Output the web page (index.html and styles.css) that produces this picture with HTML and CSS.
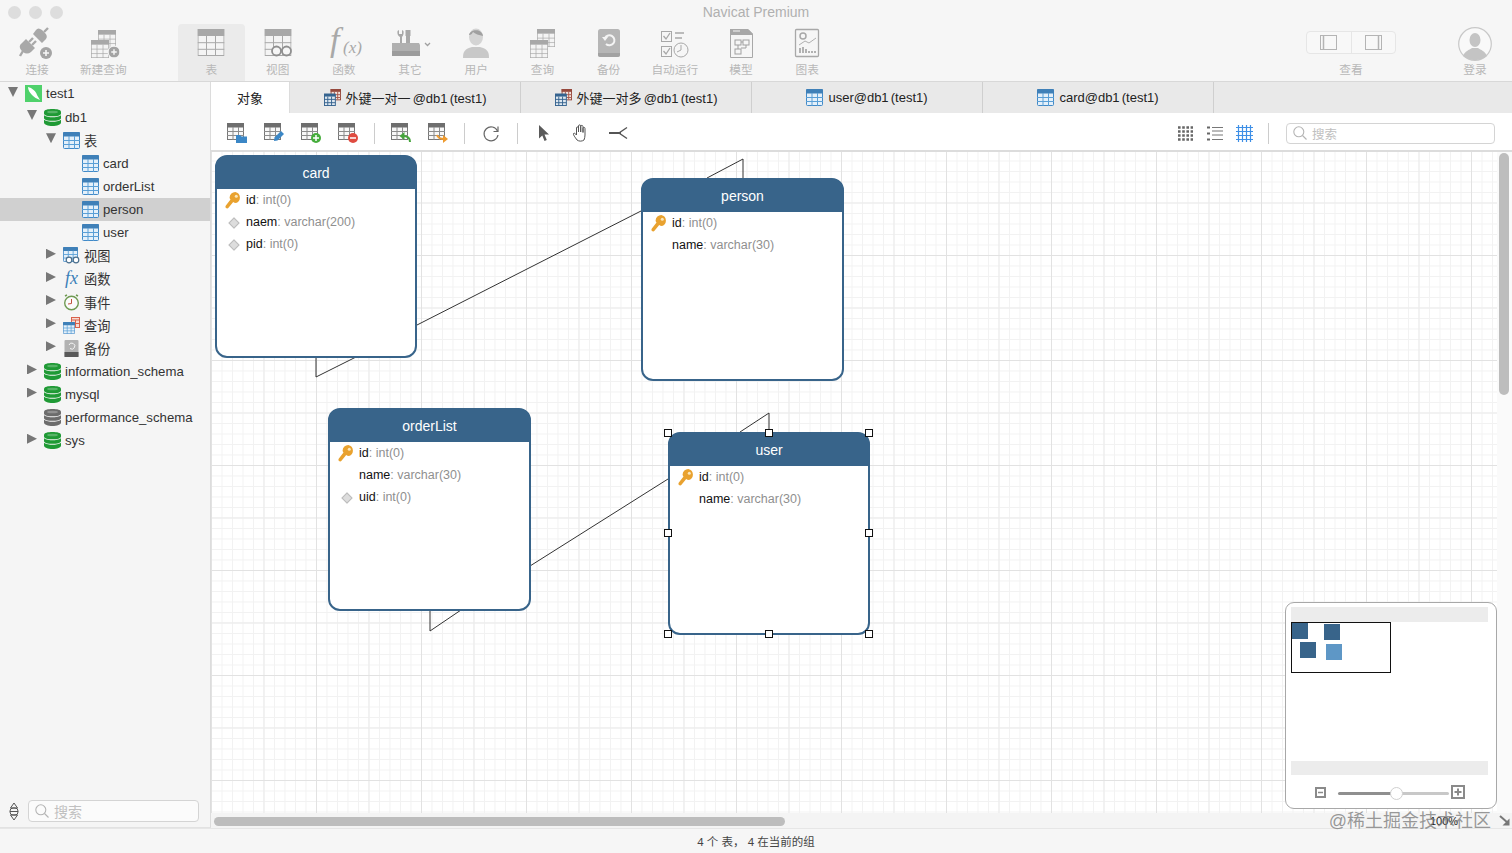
FILE: index.html
```html
<!DOCTYPE html>
<html lang="zh">
<head>
    <meta charset="UTF-8">
    <title>Navicat Premium</title>
    <link rel="stylesheet" href="styles.css">
</head>
<body>

<svg class="defs" width="0" height="0">
    <symbol id="i-gtable" viewBox="0 0 27 27">
        <rect x="0.5" y="0.5" width="26" height="26" fill="#f4f4f4" stroke="#a8a8a8"/>
        <rect width="27" height="7" fill="#a8a8a8"/>
        <path d="M9 7V27M18 7V27M0 13.7H27M0 20.3H27" stroke="#a8a8a8" fill="none"/>
    </symbol>
    <symbol id="i-dtable" viewBox="0 0 17 17">
        <rect x="0.5" y="0.5" width="16" height="16" fill="#f8f8f8" stroke="#777"/>
        <rect width="17" height="4.5" fill="#6e6e6e"/>
        <path d="M6 4V17M11.5 4V17M0 8.5H17M0 12.5H17" stroke="#8c8c8c" fill="none"/>
    </symbol>
    <symbol id="i-btable" viewBox="0 0 17 17">
        <rect x="0.5" y="0.5" width="16" height="16" rx="1" fill="#e4f0fa" stroke="#4189c7"/>
        <rect width="17" height="4.5" rx="1" fill="#3f80b8"/>
        <path d="M6 4V17M11.5 4V17M0 8.5H17M0 12.5H17" stroke="#5a9fd6" fill="none"/>
    </symbol>
    <symbol id="i-rel" viewBox="0 0 18 18">
        <rect x="7.5" y="0.5" width="10" height="11" fill="#f2e2dc" stroke="#96483c"/>
        <rect x="7" width="11" height="3" fill="#96483c"/>
        <path d="M11 3V11M14.5 3V11M7 6H18M7 9H18" stroke="#a8584c" fill="none"/>
        <rect x="0.5" y="5.5" width="11.500" height="12" fill="#dfe8f0" stroke="#35638f"/>
        <rect y="5" width="12" height="3" fill="#35638f"/>
        <path d="M4 8V18M8 8V18M0 11H12M0 14.500H12" stroke="#35638f" fill="none"/>
    </symbol>
    <symbol id="i-db" viewBox="0 0 17 17">
        <g fill="currentColor">
            <path d="M0 3C0 0.800 4 0 8.500 0S17 0.800 17 3V4.500C17 6.500 13 7.300 8.500 7.300S0 6.500 0 4.500Z"/>
            <path d="M0 6.300C2 7.800 5.500 8.300 8.500 8.300S15 7.800 17 6.300V9C17 11 13 11.800 8.500 11.800S0 11 0 9Z"/>
            <path d="M0 10.800C2 12.300 5.500 12.800 8.500 12.800S15 12.300 17 10.800V13.500C17 15.800 13 17 8.500 17S0 15.800 0 13.500Z"/>
        </g>
        <ellipse cx="8.500" cy="3" rx="5.500" ry="1.300" fill="#fff" opacity="0.250"/>
    </symbol>
    <symbol id="i-key" viewBox="0 0 16 17">
        <path d="M10.300 0A5.700 5.700 0 0 1 11 11C9.800 11 8.900 10.600 8.200 10.100L3.500 15.800C2.200 17.300 -0.400 15.600 0.700 13.800L5.500 7.500C4.900 6.700 4.600 5.800 4.600 5.400A5.700 5.700 0 0 1 10.300 0Z" fill="#e9a22f"/>
        <circle cx="11.300" cy="4.300" r="1.500" fill="#fbe7bb"/>
    </symbol>
    <symbol id="i-badge-plus" viewBox="0 0 12 12">
        <circle cx="6" cy="6" r="6" fill="#a4a4a4"/>
        <path d="M3 6H9M6 3V9" stroke="#f6f6f6" stroke-width="1.600"/>
    </symbol>
    <symbol id="i-search" viewBox="0 0 14 14">
        <circle cx="5.800" cy="5.800" r="5" fill="none" stroke="#b4b4b4" stroke-width="1.100"/>
        <path d="M9.500 9.500L13.500 13.500" stroke="#b4b4b4" stroke-width="1.100"/>
    </symbol>
</svg>

<header class="titlebar">
    <div class="lights"><i></i><i></i><i></i></div>
    <div class="title">Navicat Premium</div>
    <div></div>
</header>

<nav class="toolbar">
    <div class="tool">
        <svg width="40" height="32" viewBox="0 0 40 32">
            <g fill="#a8a8a8" stroke="none">
                <path d="M16 7L25 16L29 12Q31 9 28 6L25 3Q21 0 19 3Z"/>
                <path d="M9 12L18 21L14 25Q10 28 6 25L4 23Q1 19 5 16Z"/>
            </g>
            <path d="M27 5L31 1M6 24L3 29M12 15L16 11M15 18L19 14" stroke="#a8a8a8" stroke-width="2.400" fill="none"/>
            <use href="#i-badge-plus" x="23" y="20" width="12" height="12"/>
        </svg>
        <span>连接</span>
    </div>
    <div class="tool tool-gap-after">
        <svg width="40" height="32" viewBox="0 0 40 32">
            <use href="#i-gtable" x="15" y="2" width="18" height="20"/>
            <use href="#i-gtable" x="8" y="13" width="18" height="18"/>
            <circle cx="31" cy="25" r="6.500" fill="#f6f6f6"/>
            <use href="#i-badge-plus" x="25.500" y="19.500" width="11" height="11"/>
        </svg>
        <span>新建查询</span>
    </div>
    <div class="tool tool-active">
        <svg width="40" height="32" viewBox="0 0 40 32"><use href="#i-gtable" x="6.500" y="2" width="27" height="27"/></svg>
        <span>表</span>
    </div>
    <div class="tool">
        <svg width="40" height="32" viewBox="0 0 40 32">
            <use href="#i-gtable" x="6.500" y="2" width="27" height="27"/>
            <g fill="#f6f6f6" stroke="#8f8f8f" stroke-width="1.800">
                <circle cx="18.500" cy="24" r="4.500"/>
                <circle cx="28.500" cy="24" r="4.500"/>
            </g>
            <path d="M23 23.500H24" stroke="#8f8f8f" stroke-width="1.800"/>
        </svg>
        <span>视图</span>
    </div>
    <div class="tool">
        <svg width="40" height="32" viewBox="0 0 40 32">
            <text class="fx-big" x="6" y="24">f</text>
            <text class="fx-small" x="19" y="26">(x)</text>
        </svg>
        <span>函数</span>
    </div>
    <div class="tool">
        <svg width="40" height="32" viewBox="0 0 40 32">
            <path d="M10 16V10C8 9 7 7 7.500 4L9 3V7H12V3L13.500 4C14 7 13 9 12 10V16Z" fill="#a8a8a8"/>
            <path d="M16 16V9H15.500V3H20.500V9H20V16Z" fill="#a8a8a8"/>
            <path d="M2 16H29L30 18V29H2V18Z" fill="#b0b0b0"/>
            <rect x="2" y="24" width="28" height="5" fill="#9c9c9c"/>
            <path d="M35 16L37.500 18.500L40 16" stroke="#a0a0a0" stroke-width="1.300" fill="none"/>
        </svg>
        <span>其它</span>
    </div>
    <div class="tool">
        <svg width="40" height="32" viewBox="0 0 40 32">
            <ellipse cx="20" cy="10" rx="7" ry="8.500" fill="#d4d4d4"/>
            <path d="M13 8C14 2 26 1 27 9C23 8 19 7 17 5C16 7 15 8 13 8Z" fill="#a0a0a0"/>
            <path d="M7 31C7 24 9 22 16 20H24C31 22 33 24 33 31Z" fill="#c8c8c8"/>
        </svg>
        <span>用户</span>
    </div>
    <div class="tool">
        <svg width="40" height="32" viewBox="0 0 40 32">
            <use href="#i-gtable" x="15" y="2" width="18" height="18"/>
            <use href="#i-gtable" x="8" y="13" width="18" height="18"/>
        </svg>
        <span>查询</span>
    </div>
    <div class="tool">
        <svg width="40" height="32" viewBox="0 0 40 32">
            <rect x="9" y="2" width="22" height="28" rx="2.500" fill="#b6b6b6"/>
            <path d="M9 26H31V27.500A2.500 2.500 0 0 1 28.500 30H11.500A2.500 2.500 0 0 1 9 27.500Z" fill="#a2a2a2"/>
            <path d="M16 11A5 5 0 1 1 17 17" stroke="#f4f4f4" stroke-width="2" fill="none"/>
            <path d="M13 10H19L16 14Z" fill="#f4f4f4"/>
        </svg>
        <span>备份</span>
    </div>
    <div class="tool">
        <svg width="40" height="32" viewBox="0 0 40 32">
            <g fill="none" stroke="#a8a8a8">
                <rect x="6.500" y="4.500" width="10" height="10"/>
                <rect x="6.500" y="19.500" width="10" height="10"/>
                <path d="M8.500 9L11 12L15 6M8.500 24L11 27L15 21" stroke-width="1.300"/>
                <path d="M20 6H29M20 11H27" stroke-width="1.400"/>
                <circle cx="26" cy="23" r="7"/>
                <path d="M26 18V23L22 25"/>
            </g>
        </svg>
        <span>自动运行</span>
    </div>
    <div class="tool">
        <svg width="40" height="32" viewBox="0 0 40 32">
            <path d="M9.500 2.500H27L31.500 7V30.500H9.500Z" fill="#f6f6f6" stroke="#a8a8a8"/>
            <path d="M9 2H27L32 7V8H9Z" fill="#a8a8a8"/>
            <path d="M12 4H19" stroke="#f6f6f6"/>
            <g fill="none" stroke="#a0a0a0">
                <rect x="14" y="13" width="6" height="5"/>
                <rect x="22" y="13" width="6" height="5"/>
                <rect x="14" y="22" width="6" height="5"/>
                <path d="M17 18V22M20 15H22M25 18V21H20"/>
            </g>
        </svg>
        <span>模型</span>
    </div>
    <div class="tool">
        <svg width="40" height="32" viewBox="0 0 40 32">
            <rect x="8.500" y="2.500" width="23" height="27" rx="1" fill="#f6f6f6" stroke="#a8a8a8" stroke-width="1.300"/>
            <circle cx="16" cy="9" r="3" fill="none" stroke="#a8a8a8" stroke-width="1.500"/>
            <path d="M12 18L18 14L22 16L29 11" stroke="#b0b0b0" fill="none"/>
            <path d="M13 26V21M16 26V20M19 26V22M22 26V24M25 26V24M28 26V24" stroke="#a0a0a0" stroke-width="1.600"/>
        </svg>
        <span>图表</span>
    </div>

    <div class="tool tool-view">
        <div class="segment">
            <div class="seg-btn">
                <svg width="17" height="15" viewBox="0 0 17 15"><rect x="0.500" y="0.500" width="16" height="14" fill="none" stroke="#b4b4b4"/><path d="M3.500 1V14" stroke="#b4b4b4" stroke-width="1.500"/></svg>
            </div>
            <div class="seg-btn">
                <svg width="17" height="15" viewBox="0 0 17 15"><rect x="0.500" y="0.500" width="16" height="14" fill="none" stroke="#b4b4b4"/><path d="M13.500 1V14" stroke="#b4b4b4" stroke-width="1.500"/></svg>
            </div>
        </div>
        <span>查看</span>
    </div>
    <div class="tool tool-login">
        <svg width="40" height="34" viewBox="0 0 40 34">
            <circle cx="20" cy="17" r="16.300" fill="#f9f9f9" stroke="#c8c8c8" stroke-width="1.200"/>
            <ellipse cx="20" cy="13" rx="5.500" ry="7" fill="#c4c4c4"/>
            <path d="M8 29C10 24 14 23 17 21H23C26 23 30 24 32 29C26 34.500 14 34.500 8 29Z" fill="#c4c4c4"/>
        </svg>
        <span>登录</span>
    </div>
</nav>

<div class="main">
    <aside class="sidebar">
        <ul class="tree">
            <li class="row lv0 open"><i class="arrow"></i>
                <svg class="ticon" viewBox="0 0 17 17"><rect width="17" height="17" fill="#4fd16b"/><path d="M3 2C7 3 11 6 12 10C13 12 14 13 15 15C12 14 9 12 7 10C5 8 3 5 3 2Z" fill="#fff"/></svg>
                <span>test1</span></li>
            <li class="row lv1 open"><i class="arrow"></i><svg class="ticon db-on"><use href="#i-db"/></svg><span>db1</span></li>
            <li class="row lv2 open"><i class="arrow"></i><svg class="ticon"><use href="#i-btable"/></svg><span>表</span></li>
            <li class="row lv3"><i class="arrow none"></i><svg class="ticon"><use href="#i-btable"/></svg><span>card</span></li>
            <li class="row lv3"><i class="arrow none"></i><svg class="ticon"><use href="#i-btable"/></svg><span>orderList</span></li>
            <li class="row lv3 selected"><i class="arrow none"></i><svg class="ticon"><use href="#i-btable"/></svg><span>person</span></li>
            <li class="row lv3"><i class="arrow none"></i><svg class="ticon"><use href="#i-btable"/></svg><span>user</span></li>
            <li class="row lv2"><i class="arrow"></i>
                <svg class="ticon" viewBox="0 0 17 17"><use href="#i-btable" width="15" height="15"/><g fill="#fff" stroke="#4a6f8e" stroke-width="1.200"><circle cx="6" cy="13" r="2.800"/><circle cx="13" cy="13" r="2.800"/></g></svg>
                <span>视图</span></li>
            <li class="row lv2"><i class="arrow"></i>
                <svg class="ticon ticon-open" viewBox="0 0 17 17"><text class="fx-tree" x="2" y="14">fx</text></svg>
                <span>函数</span></li>
            <li class="row lv2"><i class="arrow"></i>
                <svg class="ticon" viewBox="0 0 17 17"><circle cx="8.500" cy="9" r="6.800" fill="#fbfbfb" stroke="#6f9a52" stroke-width="1.400"/><path d="M8.500 5V9.500L5 10" stroke="#c0503c" fill="none"/><path d="M2 2L4 1M15 2L13 1" stroke="#6f9a52" stroke-width="1.500"/></svg>
                <span>事件</span></li>
            <li class="row lv2"><i class="arrow"></i>
                <svg class="ticon" viewBox="0 0 17 17">
                    <rect x="8.500" y="0.500" width="8" height="10" fill="#f6dcd4" stroke="#d9614b"/>
                    <path d="M8 3H17M12.500 3V10M8 6.500H17" stroke="#d9614b" fill="none"/>
                    <use href="#i-btable" y="5" width="12" height="12"/>
                </svg>
                <span>查询</span></li>
            <li class="row lv2"><i class="arrow"></i>
                <svg class="ticon" viewBox="0 0 17 17"><rect x="1.500" width="14" height="17" rx="1" fill="#b2b2b2"/><rect x="1.500" y="12" width="14" height="5" fill="#595959"/><path d="M6 5A3 3 0 1 1 7 8.500" stroke="#f4f4f4" fill="none"/></svg>
                <span>备份</span></li>
            <li class="row lv1"><i class="arrow"></i><svg class="ticon db-on"><use href="#i-db"/></svg><span>information_schema</span></li>
            <li class="row lv1"><i class="arrow"></i><svg class="ticon db-on"><use href="#i-db"/></svg><span>mysql</span></li>
            <li class="row lv1"><i class="arrow none"></i><svg class="ticon db-off"><use href="#i-db"/></svg><span>performance_schema</span></li>
            <li class="row lv1"><i class="arrow"></i><svg class="ticon db-on"><use href="#i-db"/></svg><span>sys</span></li>
        </ul>
        <div class="side-foot">
            <svg class="updown" width="10" height="17" viewBox="0 0 10 17">
                <path d="M5 0L1.500 5H8.500ZM5 17L1.500 12H8.500Z" fill="none" stroke="#555"/>
                <path d="M1 8.500H9" stroke="#555"/>
                <rect x="1" y="5" width="8" height="7" rx="3" fill="none" stroke="#555"/>
            </svg>
            <div class="searchbox">
                <svg width="14" height="14"><use href="#i-search"/></svg>
                <span>搜索</span>
            </div>
        </div>
    </aside>

    <section class="content">
        <div class="tabs">
            <div class="tab tab-active">对象</div>
            <div class="tab"><svg class="tab-icon"><use href="#i-rel"/></svg>外键一对一 @db1 (test1)</div>
            <div class="tab"><svg class="tab-icon"><use href="#i-rel"/></svg>外键一对多 @db1 (test1)</div>
            <div class="tab"><svg class="tab-icon"><use href="#i-btable"/></svg>user@db1 (test1)</div>
            <div class="tab"><svg class="tab-icon"><use href="#i-btable"/></svg>card@db1 (test1)</div>
        </div>

        <div class="tools">
            <div class="btn"><svg width="22" height="22" viewBox="0 0 22 22"><use href="#i-dtable" x="1" y="1" width="17" height="17"/>
                <path d="M10 13H14L15.500 14.500H21V21H10Z" fill="#3b87c6"/></svg></div>
            <div class="btn"><svg width="22" height="22" viewBox="0 0 22 22"><use href="#i-dtable" x="1" y="1" width="17" height="17"/>
                <path d="M11 19L11.500 15.500L18 9L21 12L14.500 18.500Z" fill="#3b87c6"/></svg></div>
            <div class="btn"><svg width="22" height="22" viewBox="0 0 22 22"><use href="#i-dtable" x="1" y="1" width="17" height="17"/>
                <circle cx="16" cy="16" r="5" fill="#46ad3c"/><path d="M13 16H19M16 13V19" stroke="#fff" stroke-width="1.500"/></svg></div>
            <div class="btn"><svg width="22" height="22" viewBox="0 0 22 22"><use href="#i-dtable" x="1" y="1" width="17" height="17"/>
                <circle cx="16" cy="16" r="5" fill="#df4b40"/><path d="M13 16H19" stroke="#fff" stroke-width="1.500"/></svg></div>
            <i class="sep"></i>
            <div class="btn"><svg width="22" height="22" viewBox="0 0 22 22"><use href="#i-dtable" x="1" y="1" width="17" height="17"/>
                <path d="M20 20C20 16 17 14 13 14" stroke="#46a53c" stroke-width="2" fill="none"/><path d="M14.500 10L9.500 14L14.500 18Z" fill="#46a53c"/></svg></div>
            <div class="btn"><svg width="22" height="22" viewBox="0 0 22 22"><use href="#i-dtable" x="1" y="1" width="17" height="17"/>
                <path d="M10 13C11 16 13 17 17 17" stroke="#ee9a2e" stroke-width="2" fill="none"/><path d="M16 13L21 17L16 21Z" fill="#ee9a2e"/></svg></div>
            <i class="sep"></i>
            <div class="btn"><svg width="20" height="20" viewBox="0 0 20 20"><path d="M16.500 8A7 7 0 1 0 17 12" fill="none" stroke="#666" stroke-width="1.200"/><path d="M17 3.500V8.500H12.500" fill="none" stroke="#666" stroke-width="1.200"/></svg></div>
            <i class="sep"></i>
            <div class="btn"><svg width="16" height="18" viewBox="0 0 16 18"><path d="M3 1L13 10.500L8.500 10.500L10.800 16L8.500 17L6.300 11.500L3 14.500Z" fill="#5a5a5a"/></svg></div>
            <div class="btn"><svg width="18" height="18" viewBox="0 0 18 18"><path d="M5 16C3 13 1 11 1.500 9.500C2.500 8.500 3.500 10 4.500 11V4C4.500 2.500 6.300 2.500 6.500 4V8V2C6.500 0.500 8.500 0.500 8.700 2V8V2.500C8.700 1 10.800 1 11 2.500V8.500V4.500C11 3 13 3 13 4.500V11C13 13 12.500 14.500 12 16C10 17.500 7 17.500 5 16Z" fill="#fff" stroke="#555" stroke-width="1"/></svg></div>
            <div class="btn"><svg width="20" height="14" viewBox="0 0 20 14"><path d="M1 7H13" stroke="#555" stroke-width="2"/><path d="M19 1.500L11 7L19 12.500" stroke="#555" stroke-width="1.400" fill="none"/></svg></div>

            <div class="tools-right">
                <div class="btn-sm"><svg width="15" height="15" viewBox="0 0 15 15"><path d="M0 1.500H15M0 5.500H15M0 9.500H15M0 13.500H15" stroke="#666" stroke-width="2.400" stroke-dasharray="2.600 1.600"/></svg></div>
                <div class="btn-sm"><svg width="16" height="15" viewBox="0 0 16 15"><path d="M0 1.500H3M0 7.500H3M0 13.500H3" stroke="#666" stroke-width="2"/><path d="M5 1.500H16M5 5H16M5 9H16M5 13.500H16" stroke="#777"/></svg></div>
                <div class="btn-sm"><svg width="17" height="17" viewBox="0 0 17 17"><path d="M0 2.500H17M0 6.500H17M0 10.500H17M0 14.500H17M2.500 0V17M6.500 0V17M10.500 0V17M14.500 0V17" stroke="#3e8fe6" stroke-width="1.200"/></svg></div>
                <i class="sep sep-right"></i>
                <div class="searchbox searchbox-top">
                    <svg width="14" height="14"><use href="#i-search"/></svg>
                    <span>搜索</span>
                </div>
            </div>
        </div>

        <div class="canvas-wrap">
            <div class="diagram">
                <svg class="links" width="1290" height="665">
                    <path d="M206 173L430 59M496 26L532 7V26M105 205V225L145 205M319 414L457 327M219 458V479L250 458M529 280L558 261V280" fill="none" stroke="#333" stroke-width="1"/>
                </svg>

                <div class="er-table er-card">
                    <div class="er-head">card</div>
                    <div class="er-row"><svg class="er-icon"><use href="#i-key"/></svg><b>id</b><span>: int(0)</span></div>
                    <div class="er-row"><i class="diamond"></i><b>naem</b><span>: varchar(200)</span></div>
                    <div class="er-row"><i class="diamond"></i><b>pid</b><span>: int(0)</span></div>
                </div>
                <div class="er-table er-person">
                    <div class="er-head">person</div>
                    <div class="er-row"><svg class="er-icon"><use href="#i-key"/></svg><b>id</b><span>: int(0)</span></div>
                    <div class="er-row"><i class="er-blank"></i><b>name</b><span>: varchar(30)</span></div>
                </div>
                <div class="er-table er-order">
                    <div class="er-head">orderList</div>
                    <div class="er-row"><svg class="er-icon"><use href="#i-key"/></svg><b>id</b><span>: int(0)</span></div>
                    <div class="er-row"><i class="er-blank"></i><b>name</b><span>: varchar(30)</span></div>
                    <div class="er-row"><i class="diamond"></i><b>uid</b><span>: int(0)</span></div>
                </div>
                <div class="er-table er-user">
                    <div class="er-head">user</div>
                    <div class="er-row"><svg class="er-icon"><use href="#i-key"/></svg><b>id</b><span>: int(0)</span></div>
                    <div class="er-row"><i class="er-blank"></i><b>name</b><span>: varchar(30)</span></div>
                    <i class="handle h-tl"></i><i class="handle h-tc"></i><i class="handle h-tr"></i>
                    <i class="handle h-ml"></i><i class="handle h-mr"></i>
                    <i class="handle h-bl"></i><i class="handle h-bc"></i><i class="handle h-br"></i>
                </div>

                <div class="minimap">
                    <div class="mm-bar"></div>
                    <div class="mm-view">
                        <i class="mm-box mm-a"></i><i class="mm-box mm-b"></i><i class="mm-box mm-c"></i><i class="mm-box mm-d"></i>
                    </div>
                    <div class="mm-bar mm-bar-low"></div>
                    <div class="mm-zoom">
                        <svg width="11" height="11" viewBox="0 0 11 11"><rect x="1" y="1" width="9" height="9" fill="none" stroke="#8a8a8a" stroke-width="2"/><path d="M3 5.500H8" stroke="#8a8a8a" stroke-width="1.500"/></svg>
                        <div class="mm-track"><i class="mm-thumb"></i></div>
                        <svg width="14" height="14" viewBox="0 0 14 14"><rect x="1" y="1" width="12" height="12" fill="none" stroke="#8a8a8a" stroke-width="2"/><path d="M3.500 7H10.500M7 3.500V10.500" stroke="#8a8a8a" stroke-width="2"/></svg>
                    </div>
                </div>
            </div>
            <div class="vscroll"><i></i></div>
            <div class="hscroll"><i></i><span class="zoom-label">100%</span></div>
            <div class="corner"><svg width="12" height="12" viewBox="0 0 12 12"><path d="M1 1L9 8" stroke="#777" stroke-width="2"/><path d="M10.500 3.500V10.500H3.500Z" fill="#777"/></svg></div>
            <div class="watermark">@稀土掘金技术社区</div>
        </div>
    </section>
</div>

<footer class="status">4 个 表， 4 在当前的组</footer>

</body>
</html>
```

FILE: styles.css
```css
* {
    box-sizing: border-box;
}

html, body {
    margin: 0;
    padding: 0;
    height: 100%;
}

body {
    width: 1512px;
    height: 853px;
    overflow: hidden;
    display: flex;
    flex-direction: column;
    background-color: #f6f6f6;
    color: #222;
    font-family: "Liberation Sans", "Noto Sans CJK SC", sans-serif;
    font-size: 13px;
}

.defs {
    position: absolute;
}

/* title bar */
.titlebar {
    height: 24px;
    flex: none;
    display: grid;
    grid-template-columns: 1fr auto 1fr;
    align-items: center;
}

.lights {
    display: flex;
    gap: 8px;
    padding-left: 8px;
}

.lights i {
    width: 13px;
    height: 13px;
    border-radius: 50%;
    background-color: #dddddd;
}

.title {
    color: #b0b0b0;
    font-size: 14px;
}

/* main toolbar */
.toolbar {
    height: 58px;
    flex: none;
    display: flex;
    padding: 0 4px;
    border-bottom: 1px solid #d8d8d8;
}

.toolbar svg {
    overflow: visible;
}

.tool {
    width: 66.200px;
    flex: none;
    display: flex;
    flex-direction: column;
    align-items: center;
    justify-content: space-between;
    padding: 3px 0 4px;
    color: #b8b8b8;
    font-size: 11.700px;
    line-height: 14px;
    white-space: nowrap;
}

.tool-gap-after {
    margin-right: 42px;
}

.tool-active {
    background-color: #ebebeb;
    border-radius: 4px 4px 0 0;
}

.tool-view {
    width: 90px;
    margin-left: auto;
    margin-right: 46px;
}

.tool-login {
    width: 66px;
}

.fx-big {
    font-family: "Liberation Serif", serif;
    font-style: italic;
    font-size: 34px;
    fill: #a8a8a8;
}

.fx-small {
    font-family: "Liberation Serif", serif;
    font-style: italic;
    font-size: 17px;
    fill: #a8a8a8;
}

.fx-tree {
    font-family: "Liberation Serif", serif;
    font-style: italic;
    font-size: 18px;
    fill: #3b7fb8;
}

.segment {
    display: flex;
    width: 90px;
    height: 23px;
    margin-top: 4px;
    border: 1px solid #e6e6e6;
    border-radius: 4px;
    background-color: #f8f8f8;
}

.seg-btn {
    flex: 1;
    display: flex;
    align-items: center;
    justify-content: center;
}

.seg-btn + .seg-btn {
    border-left: 1px solid #e6e6e6;
}

/* layout */
.main {
    flex: 1;
    min-height: 0;
    display: flex;
}

.sidebar {
    width: 211px;
    flex: none;
    display: flex;
    flex-direction: column;
    background-color: #f5f5f5;
    border-right: 1px solid #dcdcdc;
    border-bottom: 1px solid #e2e2e2;
}

.content {
    flex: 1;
    min-width: 0;
    display: flex;
    flex-direction: column;
}

.status {
    height: 25px;
    flex: none;
    display: flex;
    align-items: center;
    justify-content: center;
    padding-bottom: 1px;
    font-size: 11.500px;
    color: #444;
    background-color: #f6f6f6;
    border-top: 1px solid #e6e6e6;
}

/* tree */
.tree {
    flex: 1;
    list-style: none;
    margin: 0;
    padding: 0.400px 0 0;
}

.row {
    height: 23.130px;
    display: flex;
    align-items: center;
    color: #333;
    font-size: 13.200px;
    white-space: nowrap;
}

.lv0 { padding-left: 8px; }
.lv1 { padding-left: 27px; }
.lv2 { padding-left: 46px; }
.lv3 { padding-left: 65px; }

.selected {
    background-color: #d0d0d0;
}

.arrow {
    width: 10px;
    height: 10px;
    flex: none;
    margin-right: 7px;
    margin-top: -4px;
    background-color: #777;
    clip-path: polygon(0 0, 100% 50%, 0 100%);
}

.open .arrow {
    clip-path: polygon(0 0, 100% 0, 50% 100%);
}

.arrow.none {
    visibility: hidden;
}

.ticon {
    width: 17px;
    height: 17px;
    flex: none;
    margin-right: 4px;
}

.ticon-open {
    overflow: visible;
}

.db-on {
    color: #1f9a35;
}

.db-off {
    color: #6c6c6c;
}

.side-foot {
    height: 32px;
    flex: none;
    display: flex;
    align-items: flex-start;
    padding: 5px 11px 0 9px;
    gap: 9px;
}

.updown {
    margin-top: 3px;
}

.searchbox {
    flex: 1;
    height: 22px;
    display: flex;
    align-items: center;
    gap: 5px;
    padding-left: 6px;
    background-color: #fbfbfb;
    border: 1px solid #d4d4d4;
    border-radius: 4px;
    color: #c0c0c0;
    font-size: 14px;
}

/* tabs */
.tabs {
    height: 31px;
    flex: none;
    display: flex;
    background-color: #e9e9e9;
}

.tab {
    width: 231px;
    flex: none;
    display: flex;
    align-items: center;
    justify-content: center;
    border-right: 1px solid #cfcfcf;
    color: #222;
    font-size: 13px;
    word-spacing: -1.500px;
    white-space: nowrap;
}

.tab-active {
    width: 79px;
    background-color: #ffffff;
    border-right-color: #dcdcdc;
}

.tab-icon {
    width: 17px;
    height: 17px;
    margin-right: 5px;
}

/* object toolbar */
.tools {
    height: 39px;
    flex: none;
    display: flex;
    align-items: center;
    padding: 3px 0 0 7px;
    background-color: #ffffff;
    border-bottom: 2px solid #dcdcdc;
}

.btn {
    width: 37px;
    flex: none;
    display: flex;
    align-items: center;
    justify-content: center;
}

.sep {
    width: 1px;
    height: 21px;
    flex: none;
    margin: 0 7.500px;
    background-color: #cccccc;
}

.tools-right {
    margin-left: auto;
    display: flex;
    align-items: center;
    padding-right: 17px;
}

.btn-sm {
    width: 29.500px;
    flex: none;
    display: flex;
    align-items: center;
    justify-content: center;
}

.sep-right {
    margin: 0 17px 0 9px;
}

.searchbox-top {
    flex: none;
    width: 209px;
    height: 21px;
    font-size: 12.500px;
    background-color: #ffffff;
}

/* canvas */
.canvas-wrap {
    flex: 1;
    min-height: 0;
    position: relative;
    display: grid;
    grid-template-columns: 1fr 15px;
    grid-template-rows: 1fr 15px;
    background-color: #ffffff;
}

.diagram {
    position: relative;
    overflow: hidden;
    background-color: #ffffff;
    background-image:
        linear-gradient(to right, #e2e2e2 1px, transparent 1px),
        linear-gradient(to bottom, #e2e2e2 1px, transparent 1px),
        linear-gradient(to right, #ebebeb 1px, transparent 1px),
        linear-gradient(to bottom, #ebebeb 1px, transparent 1px),
        linear-gradient(to right, #f2f2f2 1px, transparent 1px),
        linear-gradient(to bottom, #f2f2f2 1px, transparent 1px);
    background-size: 105px 105px, 105px 105px, 52.500px 52.500px, 52.500px 52.500px, 10.500px 10.500px, 10.500px 10.500px;
    background-position: 0 -2px;
}

.links {
    position: absolute;
    left: 0;
    top: 0;
}

.er-table {
    position: absolute;
    width: 203px;
    height: 203px;
    background-color: #ffffff;
    border: 2px solid #38648a;
    border-radius: 12px;
}

.er-card { left: 4px; top: 3px; width: 202px; }
.er-person { left: 430px; top: 26px; }
.er-order { left: 117px; top: 256px; }
.er-user { left: 457px; top: 280px; width: 202px; }

.er-head {
    height: 33px;
    display: flex;
    align-items: center;
    justify-content: center;
    margin: -1px -1px 0;
    padding-top: 1px;
    background-color: #38648a;
    border-radius: 10px 10px 0 0;
    color: #ffffff;
    font-size: 14px;
}

.er-row {
    height: 22px;
    display: flex;
    align-items: center;
    padding-left: 8px;
    font-size: 12.500px;
    color: #8f8f8f;
    white-space: nowrap;
}

.er-row b {
    font-weight: normal;
    color: #111;
}

.er-icon {
    width: 16px;
    height: 17px;
    margin-right: 5px;
}

.er-blank {
    width: 21px;
    flex: none;
}

.diamond {
    width: 8px;
    height: 8px;
    flex: none;
    margin: 2px 8px 0 5px;
    background-color: #dddddd;
    border: 1px solid #bcbcbc;
    transform: rotate(45deg);
}

.handle {
    position: absolute;
    width: 8px;
    height: 8px;
    background-color: #ffffff;
    border: 1.500px solid #111;
}

.h-tl { left: -6px; top: -5px; }
.h-tc { left: 95px; top: -5px; }
.h-tr { left: 195px; top: -5px; }
.h-ml { left: -6px; top: 95px; }
.h-mr { left: 195px; top: 95px; }
.h-bl { left: -6px; top: 196px; }
.h-bc { left: 95px; top: 196px; }
.h-br { left: 195px; top: 196px; }

/* minimap */
.minimap {
    position: absolute;
    left: 1074px;
    top: 450px;
    width: 212px;
    height: 207px;
    display: flex;
    flex-direction: column;
    padding: 4px 8px 0 5px;
    background-color: #ffffff;
    border: 1px solid #a8a8a8;
    border-radius: 9px;
}

.mm-bar {
    height: 15px;
    flex: none;
    background-color: #ececec;
}

.mm-bar-low {
    margin-top: 88px;
    height: 14px;
}

.mm-view {
    position: relative;
    width: 99.500px;
    height: 51px;
    flex: none;
    border: 1px solid #111;
    border-left-width: 1.500px;
    border-bottom-width: 1.500px;
}

.mm-box {
    position: absolute;
    width: 16px;
    height: 16px;
    background-color: #38648a;
}

.mm-a { left: 0; top: 0; }
.mm-b { left: 32px; top: 1px; }
.mm-c { left: 8px; top: 19px; }
.mm-d { left: 34px; top: 21px; background-color: #5e97c6; }

.mm-zoom {
    display: flex;
    align-items: center;
    padding: 10px 0 0 24px;
}

.mm-track {
    position: relative;
    width: 111px;
    height: 3px;
    margin: 3px 2px 0 12px;
    border-radius: 2px;
    background: linear-gradient(to right, #8f8f8f 52%, #c8c8c8 52%);
}

.mm-thumb {
    position: absolute;
    left: 52px;
    top: -5px;
    width: 13px;
    height: 13px;
    background-color: #ffffff;
    border: 1px solid #d0d0d0;
    border-radius: 50%;
}

/* scrollbars */
.vscroll {
    background-color: #fafafa;
    padding: 1px 3px 0 2px;
}

.vscroll i {
    display: block;
    width: 10px;
    height: 242px;
    border-radius: 5px;
    background-color: #bdbdbd;
}

.hscroll {
    position: relative;
    background-color: #f4f4f4;
    padding: 4px 0 0 3px;
}

.hscroll i {
    display: block;
    width: 571px;
    height: 9px;
    border-radius: 5px;
    background-color: #bdbdbd;
}

.zoom-label {
    position: absolute;
    left: 1219px;
    top: 2px;
    font-size: 11px;
    color: #222;
}

.corner {
    display: flex;
    align-items: center;
    justify-content: center;
    background-color: #f4f4f4;
}

.watermark {
    position: absolute;
    right: 21px;
    bottom: -4px;
    font-size: 18px;
    line-height: 22px;
    color: rgba(120, 120, 120, 0.75);
    white-space: nowrap;
}
```
